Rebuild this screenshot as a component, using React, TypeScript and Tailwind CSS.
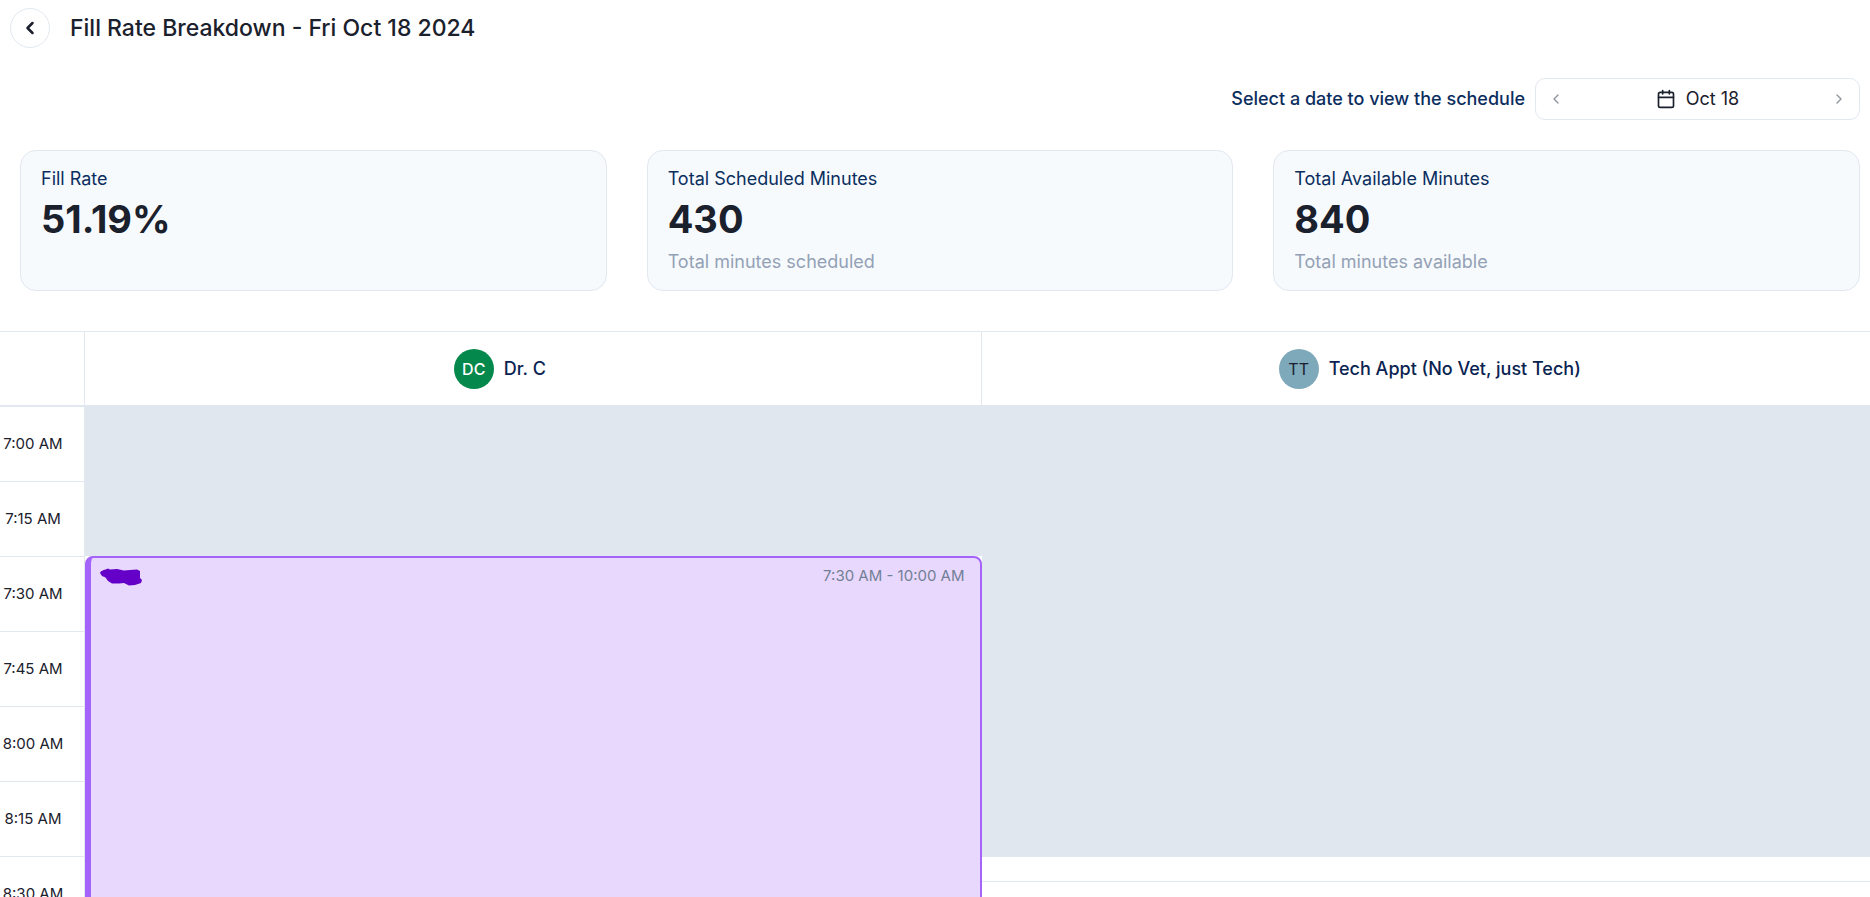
import { FiCalendar, FiChevronLeft, FiChevronRight } from "react-icons/fi";

type Stat = {
    label: string;
    value: string;
    note?: string;
}

const stats: Stat[] = [
    { label: "Fill Rate", value: "51.19%" },
    { label: "Total Scheduled Minutes", value: "430", note: "Total minutes scheduled" },
    { label: "Total Available Minutes", value: "840", note: "Total minutes available" },
]

const times = [
    "7:00 AM", "7:15 AM", "7:30 AM", "7:45 AM",
    "8:00 AM", "8:15 AM", "8:30 AM", "8:45 AM",
]

const StatCard: React.FC<Stat> = ({ label, value, note }) => {
    return (
        <div className="rounded-2xl border border-[#e2e8f0] bg-[#f6fafd] px-5 pt-3 pb-[10px]">
            <div className="text-lg leading-8 text-[#0b2e5e]">{label}</div>
            <div className="text-[38px] leading-[49px] font-bold text-[#1a202c]">{value}</div>
            <div className="h-9 text-lg leading-9 text-[#94a1b5]">{note}</div>
        </div>
    )
}

const DatePicker = () => {
    return (
        <div className="flex h-[42px] w-[325px] items-center justify-between rounded-[10px] border border-[#e2e8f0] px-3">
            <button aria-label="Previous day" className="text-[#8f959e]">
                <FiChevronLeft size={16} />
            </button>
            <button className="flex items-center gap-[10px] text-lg text-[#1a202c]">
                <FiCalendar size={20} />
                Oct 18
            </button>
            <button aria-label="Next day" className="text-[#8f959e]">
                <FiChevronRight size={16} />
            </button>
        </div>
    )
}

const Appointment = () => {
    return (
        <div className="flex h-[750px] items-start justify-between rounded-lg border-2 border-l-6 border-[#a463f9] bg-[#e9d8fd] pt-2 pr-[15px] pl-[9px]">
            {/* client name is scribbled out */}
            <svg width="42" height="26" viewBox="0 0 42 26" aria-label="Hidden client name">
                <path
                    fill="#6400c8"
                    d="M0 7C1 4 5 4 8 2.500L10 3.500 17 3 24 4.500 30 4 37 3.500 40 5 40 12 42 14 41 17 38 18 35 19 29 19.500 24 17 19 17.500 12 17.500 8 15 5.500 11.500 2 10Z"
                />
            </svg>
            <span className="text-[15px] leading-5 text-[#718096]">7:30 AM - 10:00 AM</span>
        </div>
    )
}

export default function App() {
    return (
        <div className="flex h-screen flex-col overflow-hidden bg-white font-['Inter',sans-serif]">
            <header className="flex items-center gap-5 px-[10px] pt-2">
                <button aria-label="Back" className="flex size-10 items-center justify-center rounded-full border border-[#e2e8f0] text-[#1a202c]">
                    <FiChevronLeft size={20} strokeWidth={3} />
                </button>
                <h1 className="text-[23px] leading-10 font-medium text-[#1a202c]">Fill Rate Breakdown - Fri Oct 18 2024</h1>
            </header>

            <div className="mt-[30px] flex items-center justify-end gap-[10px] pr-[10px]">
                <span className="text-lg font-medium text-[#0b2e5e]">Select a date to view the schedule</span>
                <DatePicker />
            </div>

            <div className="mt-[30px] grid grid-cols-3 gap-10 pr-[10px] pl-5">
                {stats.map((item) => (
                    <StatCard key={item.label} {...item} />
                ))}
            </div>

            <main className="mt-10 -mr-2 min-h-0 flex-1 overflow-hidden">
                <div className="grid h-[75px] grid-cols-[85px_1fr_1fr] border-y border-[#e2e8f0] text-lg font-medium text-[#0a2351]">
                    <div className="border-r border-[#e2e8f0]"></div>
                    <div className="flex items-center justify-center gap-[10px] border-r border-[#e2e8f0]">
                        <div className="flex size-10 items-center justify-center rounded-full bg-[#05884b] text-base text-white">DC</div>
                        <div className="w-[108px]">Dr. C</div>
                    </div>
                    <div className="flex items-center justify-center gap-[10px]">
                        <div className="flex size-10 items-center justify-center rounded-full bg-[#7ea9ba] text-base font-normal text-[#1a202c]">TT</div>
                        <div>Tech Appt (No Vet, just Tech)</div>
                    </div>
                </div>
                <div className="grid grid-cols-[85px_1fr_1fr]">
                    <div className="border-r border-[#e2e8f0]">
                        {times.map((time) => (
                            <div key={time} className="flex h-[75px] items-center justify-center border-t border-[#e2e8f0] pr-[18px] text-[15px] whitespace-nowrap text-[#1a202c]">
                                {time}
                            </div>
                        ))}
                    </div>
                    <div>
                        <div className="h-[150px] bg-[#e0e7ef]"></div>
                        <Appointment />
                    </div>
                    <div>
                        <div className="h-[450px] bg-[#e0e7ef]"></div>
                        {/* open slots, 5 minutes each */}
                        {[0, 1, 2, 3, 4, 5].map((slot) => (
                            <div key={slot} className="h-[25px] border-t border-[#e2e8f0]"></div>
                        ))}
                    </div>
                </div>
            </main>
        </div>
    )
}
